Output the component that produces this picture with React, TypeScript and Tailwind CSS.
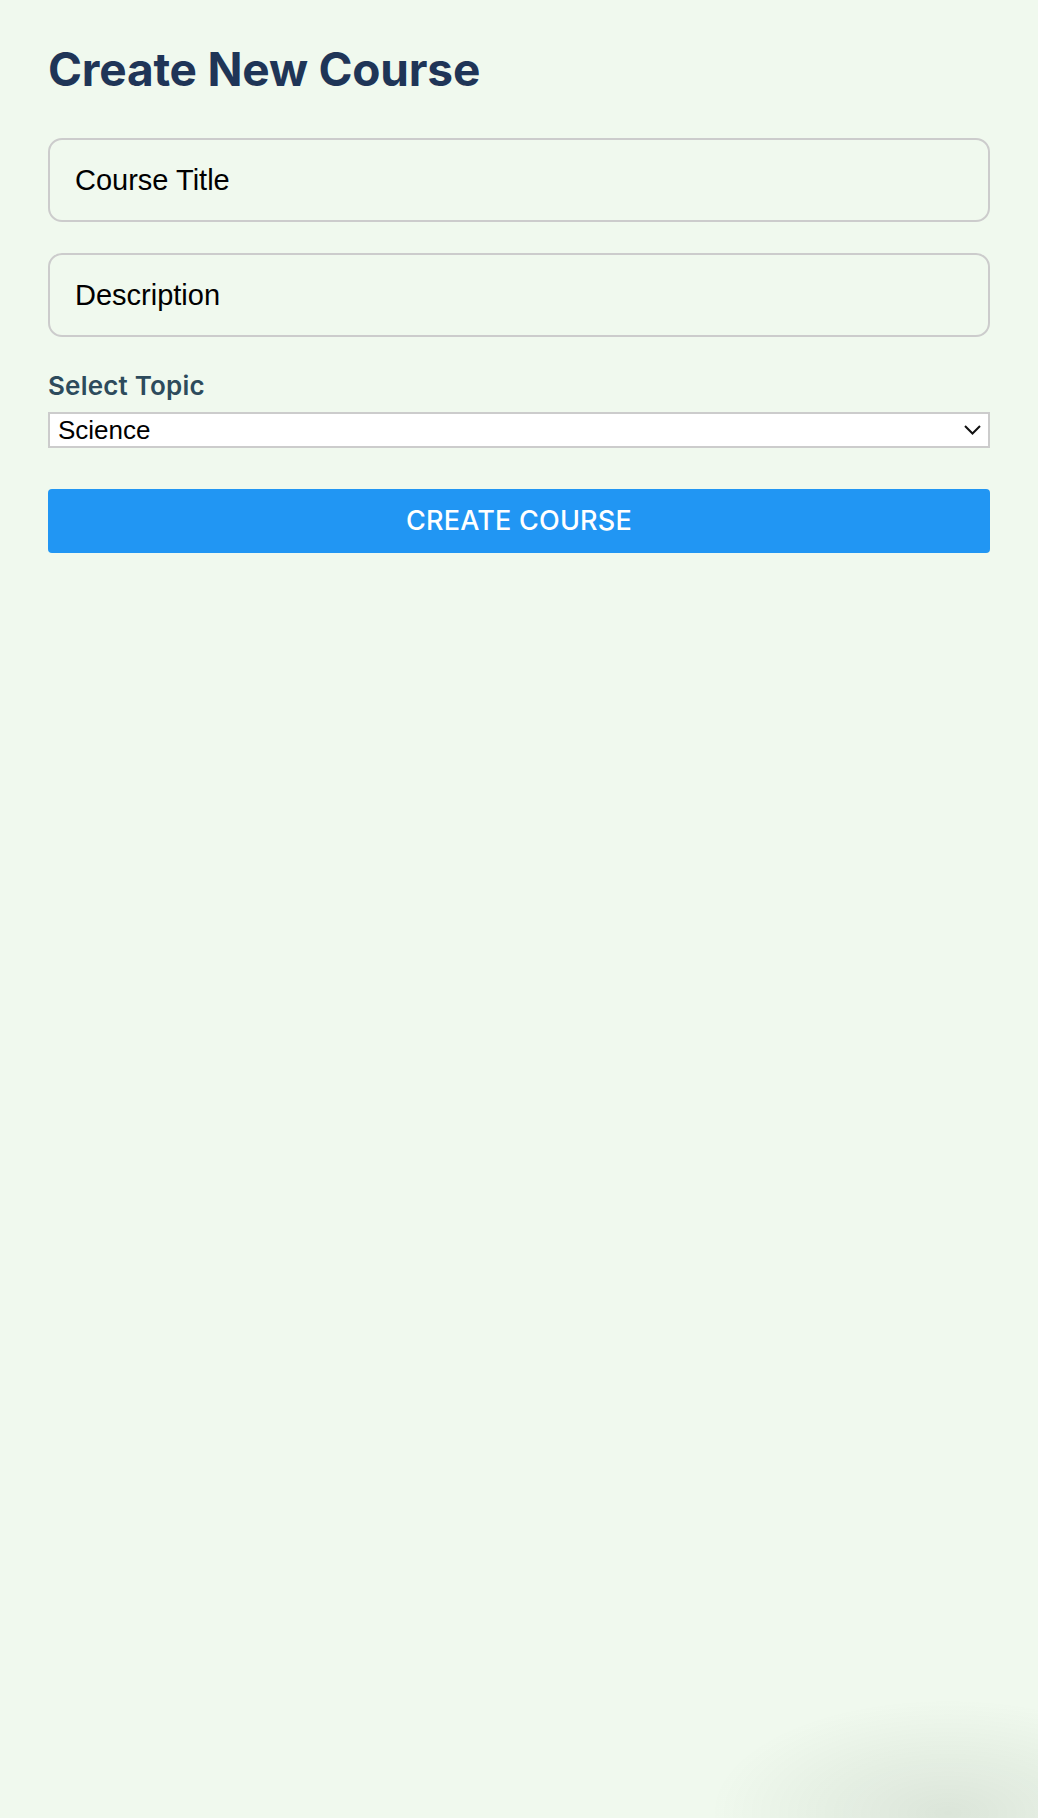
import React from "react";

const topics = ["Science", "Math", "History", "Art", "Technology"];

export default function App() {
  return (
    <div className="relative min-h-screen overflow-hidden bg-[#f0f9ee] px-12 pt-[42px]">
      {/* Title */}
      <h1 className="font-['Inter',sans-serif] text-[46px] leading-[54px] font-bold text-[#1f3557] tracking-[-0.2px]">
        Create New Course
      </h1>

      <form className="mt-[42px] flex flex-col" onSubmit={(e) => e.preventDefault()}>
        <input
          type="text"
          placeholder="Course Title"
          className="h-[84px] w-full rounded-[14px] border-2 border-[#cccccc] bg-transparent px-[25px] font-['Liberation_Sans',Arial,sans-serif] text-[29px] text-black placeholder:text-black outline-none"
        />
        <input
          type="text"
          placeholder="Description"
          className="mt-[31px] h-[84px] w-full rounded-[14px] border-2 border-[#cccccc] bg-transparent px-[25px] font-['Liberation_Sans',Arial,sans-serif] text-[29px] text-black placeholder:text-black outline-none"
        />

        {/* Topic select */}
        <label className="mt-[33px] font-['Inter',sans-serif] text-[26px] leading-[32px] font-semibold text-[#2d4b5c] tracking-[0.2px]">
          Select Topic
        </label>
        <div className="relative mt-[10px]">
          <select
            defaultValue="Science"
            className="h-[36px] w-full appearance-none rounded-none border-2 border-[#cccccc] bg-white pl-[8px] font-['Liberation_Sans',Arial,sans-serif] text-[26px] leading-none text-black outline-none"
          >
            {topics.map((t) => (
              <option key={t} value={t}>
                {t}
              </option>
            ))}
          </select>
          <svg
            className="pointer-events-none absolute right-[9px] top-[13px]"
            width="17"
            height="10"
            viewBox="0 0 17 10"
            fill="none"
          >
            <path d="M1 1l7.5 7.5L16 1" stroke="#111" strokeWidth="2" />
          </svg>
        </div>

        <button
          type="submit"
          className="mt-[41px] h-[64px] w-full rounded-[4px] bg-[#2196f3] font-['Inter',sans-serif] text-[27px] font-medium uppercase text-white tracking-[0.2px]"
        >
          Create Course
        </button>
      </form>

      {/* faint shadow in the corner */}
      <div className="pointer-events-none fixed -bottom-[110px] -right-[150px] h-[230px] w-[480px] rounded-full bg-[radial-gradient(ellipse_at_center,rgba(40,60,40,0.1),rgba(40,60,40,0)_70%)]" />
    </div>
  );
}
